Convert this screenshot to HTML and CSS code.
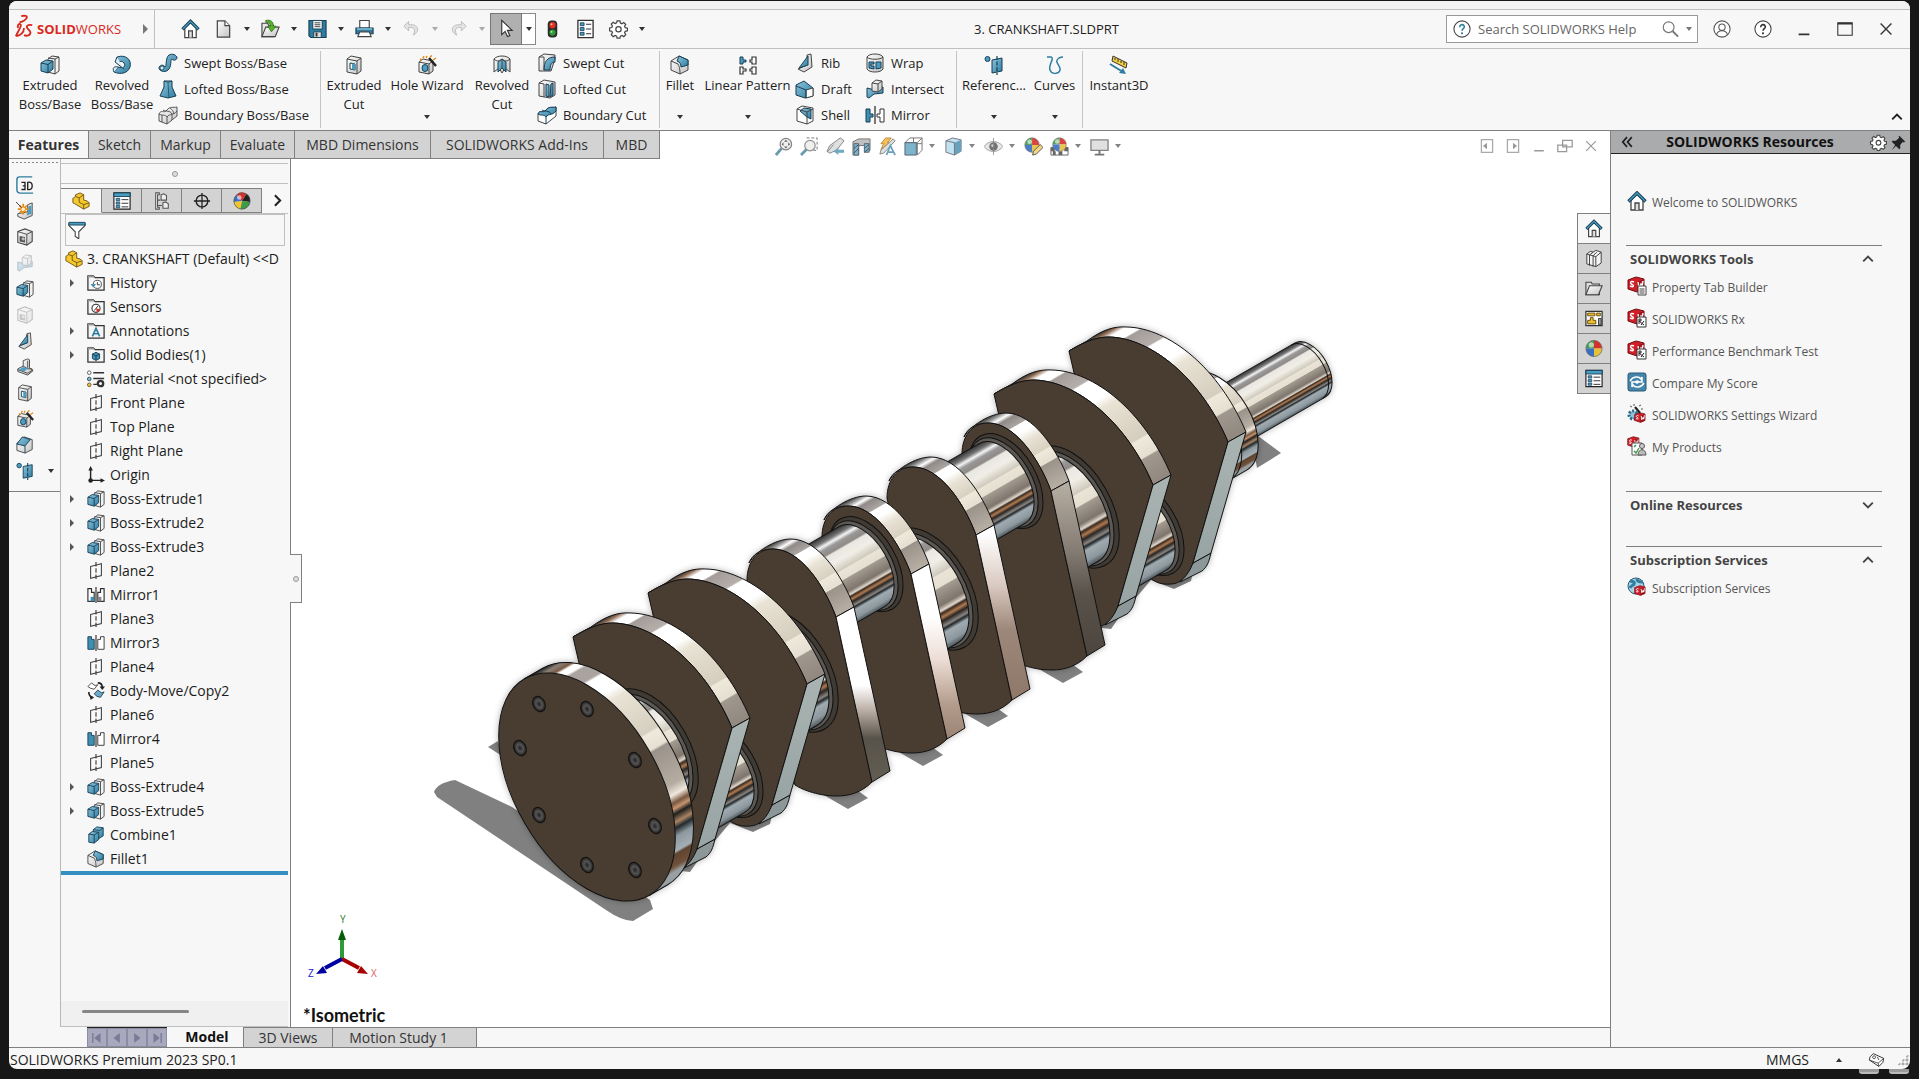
FILE: index.html
```html
<!DOCTYPE html>
<html lang="en">
<head>
<meta charset="utf-8">
<title>3. CRANKSHAFT.SLDPRT</title>
<link rel="stylesheet" href="styles.css">
</head>
<body>
<svg class="defs" aria-hidden="true">
<defs>
<linearGradient id="blue" x1="0" y1="0" x2="1" y2="1"><stop offset="0" stop-color="#8cc4dd"/><stop offset="1" stop-color="#2f7da0"/></linearGradient>
<linearGradient id="grey" x1="0" y1="0" x2="1" y2="1"><stop offset="0" stop-color="#ffffff"/><stop offset="1" stop-color="#c4c4c4"/></linearGradient>
</defs>
<symbol id="home" viewBox="0 0 20 20"><path d="M4 9v10h12V9l-6-6z" fill="#fff" stroke="#444" stroke-width="1.3"/><path d="M8 19v-7h4v7" fill="#ddd" stroke="#444" stroke-width="1.3"/><path d="M1.500 10.500L10 2l8.500 8.500" fill="none" stroke="#173f54" stroke-width="3.400"/><path d="M2 10L10 2l8 8" fill="none" stroke="#4a9dc2" stroke-width="1.300"/></symbol>
<symbol id="new" viewBox="0 0 20 20"><path d="M3.500 1.500h8l5 5v12h-13z" fill="url(#grey)" stroke="#444" stroke-width="1.300"/><path d="M11.500 1.500v5h5" fill="#fff" stroke="#444" stroke-width="1.200"/></symbol>
<symbol id="open" viewBox="0 0 20 20"><path d="M1 18V4h6l1 2h5v12z" fill="#e8e8e8" stroke="#444" stroke-width="1.200"/><path d="M1 18L5 8h14l-4 10z" fill="url(#grey)" stroke="#444" stroke-width="1.200"/><path d="M5 1c5-1 8 1 8 6h3l-5 6-4-6h3c0-3-2-4-5-4z" fill="#58b32c" stroke="#2c6b12" stroke-width=".8"/></symbol>
<symbol id="save" viewBox="0 0 20 20"><path d="M1 1h18v18H3l-2-2z" fill="#2f7da0" stroke="#173f54" stroke-width="1.200"/><path d="M5 1h10v9H5z" fill="#f4f4f4" stroke="#173f54"/><path d="M7 3.500h6M7 5.500h6M7 7.500h6" stroke="#444"/><path d="M6 13h8v6H6z" fill="#ddd" stroke="#173f54"/><path d="M8 14h2v4H8z" fill="#333"/></symbol>
<symbol id="print" viewBox="0 0 20 20"><path d="M5 1h10v8H5z" fill="#fff" stroke="#444" stroke-width="1.200"/><path d="M1 9h18v6H1z" fill="#2f7da0" stroke="#173f54" stroke-width="1.200"/><path d="M2 10h16" stroke="#8cc4dd" stroke-width="1.500"/><path d="M5 13h10l2 5H3z" fill="#fff" stroke="#444" stroke-width="1.200"/></symbol>
<symbol id="undo" viewBox="0 0 20 20"><path d="M7 2L2 7l5 5V8.500c5-1 8 1 5 8 7-4 6-12-5-11z" fill="#e4e4e4" stroke="#bbb"/></symbol>
<symbol id="redo" viewBox="0 0 20 20"><path d="M13 2l5 5-5 5V8.500c-5-1-8 1-5 8-7-4-6-12 5-11z" fill="#e4e4e4" stroke="#bbb"/></symbol>
<symbol id="cursor" viewBox="0 0 20 20"><path d="M5 1v15l3.500-3.500L11 18l2.500-1L11 11.500h5z" fill="#fff" stroke="#333" stroke-width="1.200"/></symbol>
<symbol id="traffic" viewBox="0 0 20 20"><rect x="5" y="1" width="10" height="18" rx="4" fill="#2b2b2b"/><circle cx="10" cy="6" r="3.300" fill="#e2321f"/><circle cx="10" cy="13.800" r="3.300" fill="#2f9a36"/><circle cx="9" cy="5" r="1" fill="#fbb"/><circle cx="9" cy="13" r="1" fill="#bfb"/></symbol>
<symbol id="list" viewBox="0 0 20 20"><path d="M2 1h16v18H2z" fill="#fff" stroke="#333" stroke-width="1.400"/><path d="M4.500 3.500h4v3h-4zM4.500 8.500h4v3h-4zM4.500 13.500h4v3h-4z" fill="#4a9dc2" stroke="#173f54" stroke-width=".9"/><path d="M10.500 5H16M10.500 10H16M10.500 15H16" stroke="#333" stroke-width="1.200"/></symbol>
<symbol id="gear" viewBox="0 0 20 20"><path d="M8.500 1.500h3l.5 2.200 1.600.7 2-1.300 2 2-1.200 2 .7 1.500 2.300.5v2.800l-2.300.6-.7 1.500 1.200 2-2 2-2-1.200-1.600.7-.5 2h-3l-.5-2-1.600-.7-2 1.200-2-2 1.200-2-.7-1.500-2.300-.6V8.900l2.300-.5.7-1.500-1.200-2 2-2 2 1.300 1.600-.7z" fill="#fff" stroke="#444" stroke-width="1.300"/><circle cx="10" cy="10.300" r="2.800" fill="#fff" stroke="#444" stroke-width="1.300"/></symbol>
<symbol id="extrude" viewBox="0 0 20 20"><path d="M8 4l4-3 7 1v14l-4 3-7-2z" fill="#f2f2f2" stroke="#444"/><path d="M15 4v15M8 3l7 1 4-2" fill="none" stroke="#444"/><path d="M1 8l5-3 7 1-0 8-5 4-7-2z" fill="url(#blue)" stroke="#173f54"/><path d="M1 8l7 1.500L13 6M8 9.500V18" fill="none" stroke="#173f54"/></symbol>
<symbol id="revolve" viewBox="0 0 20 20"><path d="M5 2c9-3 15 3 13 10-2 6-9 8-16 5l4-5c6 2 8-1 6-4-1-2-4-2-7-1z" fill="url(#blue)" stroke="#173f54"/><path d="M5 2l-2 5 9 7M2 17c-2-4 0-6 4-5" fill="#d9edf5" stroke="#173f54"/></symbol>
<symbol id="sweep" viewBox="0 0 20 20"><path d="M1 15c0-3 5-4 6-1 2 0 0-9 4-12 3-2 8 0 8 3 0 2-4 3-5 1-2 0 0 8-4 11-3 3-9 1-9-2z" fill="url(#blue)" stroke="#173f54"/><circle cx="4" cy="15" r="2" fill="#d9edf5" stroke="#173f54" stroke-width=".8"/></symbol>
<symbol id="loft" viewBox="0 0 20 20"><path d="M6 2h8v6l4 9-8 2-8-2 4-9z" fill="url(#blue)" stroke="#173f54"/><path d="M6 2l4 1.500L14 2M10 4l1 15" stroke="#173f54" fill="none" stroke-width=".7"/></symbol>
<symbol id="boundary" viewBox="0 0 20 20"><path d="M1 9c2-5 5 0 8-4s6-2 10-3v9l-10 8-8-3z" fill="url(#grey)" stroke="#555"/><path d="M1 9c3 2 6 0 8 3v7M9 12c3-4 6-1 10-6M5 5c3 2 7 0 9 4v6M4 10v7M12 3c2 2 3 2 4 6" fill="none" stroke="#555"/></symbol>
<symbol id="boundcut" viewBox="0 0 20 20"><path d="M1 9c2-5 5 0 8-4s6-2 10-3v9l-10 8-8-3z" fill="#fff" stroke="#444"/><path d="M1 9c2-5 5 0 8-4s6-2 10-3v4c-4 5-7 2-10 6-2-3-5-1-8-3z" fill="url(#blue)" stroke="#173f54"/><path d="M9 12v7M5 5c3 2 7 0 9 4" fill="none" stroke="#173f54"/></symbol>
<symbol id="excut" viewBox="0 0 20 20"><path d="M3 4l4-3 10 2v13l-4 3-10-2z" fill="url(#grey)" stroke="#444"/><path d="M3 4l10 2 4-3M13 6v13" fill="none" stroke="#444"/><path d="M6 8l5 1v6l-5-1z" fill="#fff" stroke="#173f54"/><path d="M8 8.500l3 .5v6l-3-.7z" fill="#4a9dc2"/></symbol>
<symbol id="cavity" viewBox="0 0 20 20"><path d="M2 4l8-3 8 3v11l-6 4-10-3z" fill="url(#grey)" stroke="#444" stroke-width="1.200"/><path d="M2 4l10 3 6-3M12 7v12" fill="none" stroke="#444"/><path d="M4 9l6 1v6l-6-1z" fill="#555"/><circle cx="8" cy="12" r="1.800" fill="#bbb"/></symbol>
<symbol id="sheet" viewBox="0 0 20 20"><path d="M8 3l5-2 2 1v9l4 3-6 5-11-4v-3l6-3z" fill="url(#grey)" stroke="#444"/><path d="M8 9l5 3h5M13 3v8M2 13l11 4 6-4" fill="none" stroke="#444"/><path d="M8 10l5 2-4 3-6-2z" fill="#4a9dc2"/></symbol>
<symbol id="hole" viewBox="0 0 20 20"><path d="M2 7l4-3 10 2v10l-4 3-10-2z" fill="url(#grey)" stroke="#444"/><path d="M2 7l10 2 4-3M12 9v10" fill="none" stroke="#444"/><ellipse cx="8" cy="13" rx="3" ry="3.500" fill="#4a9dc2" stroke="#173f54"/><path d="M12 3l7 8" stroke="#222" stroke-width="2.500"/><path d="M6 3l1-2M9 3l1-2M13 2l2-1.500M16 5l3-2M5 5L3 4" stroke="#e48b1a" stroke-width="1.500"/></symbol>
<symbol id="series" viewBox="0 0 20 20"><path d="M13 3l5-2v14l-9 4-7-3v-3l11-2z" fill="url(#grey)" stroke="#444"/><path d="M14 5l3-1v9l-5 2z" fill="#4a9dc2"/><path d="M8 2v12M2 8h12M4 4l8 8M12 4l-8 8" stroke="#e48b1a" stroke-width="2"/><circle cx="8" cy="8" r="2" fill="#fff3d0"/><path d="M0 0l6 6" stroke="#333"/></symbol>
<symbol id="revcut" viewBox="0 0 20 20"><path d="M2 4c3-4 13-4 16 0v13l-5-4-3 5-3-5-5 4z" fill="url(#grey)" stroke="#444"/><path d="M6 7l4-3 4 3v10l-4-4-4 4z" fill="url(#blue)" stroke="#173f54"/><path d="M2 4c3 3 6 2 8 0 2 2 5 3 8 0M10 4v10" fill="none" stroke="#444"/></symbol>
<symbol id="sweepcut" viewBox="0 0 20 20"><path d="M2 4l5-3 11 1v4L14 18H2z" fill="url(#grey)" stroke="#444"/><path d="M7 17C7 9 10 4 18 4v5c-4 0-5 4-5 8z" fill="url(#blue)" stroke="#173f54"/><path d="M2 4h5v13" fill="none" stroke="#444"/></symbol>
<symbol id="loftcut" viewBox="0 0 20 20"><path d="M2 4l5-3 11 2v13l-5 3-11-2z" fill="url(#grey)" stroke="#444"/><path d="M9 5l3 1v12l-3-1zM14 5l2-1v12l-3 2z" fill="url(#blue)" stroke="#173f54"/><path d="M2 4l5 1v13" fill="none" stroke="#444"/></symbol>
<symbol id="fillet" viewBox="0 0 20 20"><path d="M1 6l8-5 9 4v10l-8 4-9-4z" fill="url(#grey)" stroke="#444"/><path d="M1 6l7 3c1 2 2 4 2 10" fill="none" stroke="#444"/><path d="M9 1l9 4v5l-7 2c0-3-1-5-4-6z" fill="url(#blue)" stroke="#173f54"/></symbol>
<symbol id="fillet2" viewBox="0 0 20 20"><path d="M1 8l8-7 9 3v11l-8 4-9-3z" fill="url(#grey)" stroke="#444"/><path d="M1 9l6-8 9 3-6 7zM10 11v8" fill="url(#blue)" stroke="#173f54"/></symbol>
<symbol id="pattern" viewBox="0 0 20 20"><g fill="#fff" stroke="#333" stroke-width="1.200"><path d="M18 2h-4v3h-2v2h2v2h4zM2 12h3v2h3v2H5v3H2zM18 12h-4v2h-2v2h2v3h4z"/></g><path d="M2 2h3v3h3v2H5v2H2z" fill="#4a9dc2" stroke="#173f54"/></symbol>
<symbol id="rib" viewBox="0 0 20 20"><path d="M12 2l4-1 1 13-8 5-6-3 9-4z" fill="url(#grey)" stroke="#444"/><path d="M13 3l-9 12 9-3z" fill="url(#blue)" stroke="#173f54"/></symbol>
<symbol id="draft" viewBox="0 0 20 20"><path d="M1 6l8-4 9 7v8l-8 2-9-3z" fill="url(#blue)" stroke="#173f54"/><path d="M11 11l7-2v8l-7 2z" fill="#fff" stroke="#444"/><path d="M1 7l10 4v8" fill="none" stroke="#173f54"/></symbol>
<symbol id="shell" viewBox="0 0 20 20"><path d="M2 4l5-3 11 2v13l-6 3L2 16z" fill="#fff" stroke="#444"/><path d="M5 6l4-3 7 1v10l-4-2z" fill="url(#blue)" stroke="#173f54"/><path d="M2 4l10 3v12M12 7l6-3" fill="none" stroke="#444"/></symbol>
<symbol id="wrap" viewBox="0 0 20 20"><path d="M2 4v12c2 4 14 4 16 0V4c-2-4-14-4-16 0z" fill="url(#grey)" stroke="#444"/><path d="M2 4c2 3 14 3 16 0" fill="none" stroke="#444"/><path d="M4 9h5v2H6v2h3v3l-5-1zM11 9h5v6l-5 1z" fill="#4a9dc2" stroke="#173f54"/></symbol>
<symbol id="intersect" viewBox="0 0 20 20"><path d="M2 9l8 2 8-3v6l-9 1-5 4-2-1z" fill="url(#blue)" stroke="#173f54"/><path d="M7 4l4-3 6 1v8l-4 3-6-1z" fill="url(#grey)" stroke="#444"/><path d="M7 4l6 1 4-3M13 5v8" fill="none" stroke="#444"/></symbol>
<symbol id="mirror" viewBox="0 0 20 20"><path d="M1 4h4v5h3v3H5v5H1z" fill="#3f8fb3" stroke="#173f54"/><path d="M19 4h-4v5h-3v3h3v5h4z" fill="#fff" stroke="#333"/><path d="M10 1v18" stroke="#222" stroke-width="1.200"/></symbol>
<symbol id="mirrorf" viewBox="0 0 20 20"><path d="M1 3h4v4h3v10H1zM19 3h-4v4h-3v10h7z" fill="#fff" stroke="#333" stroke-width="1.300"/><path d="M4 12h4v5H4z" fill="#3f8fb3"/><path d="M12 12h4v5h-4z" fill="#888"/><path d="M10 1v18" stroke="#222" stroke-width="1.200"/></symbol>
<symbol id="mirrorb" viewBox="0 0 20 20"><path d="M1 3h4v3h3v11H1z" fill="#3f8fb3" stroke="#173f54"/><path d="M19 3h-4v3h-3v11h7z" fill="#fff" stroke="#333"/><path d="M10 1v18" stroke="#222" stroke-width="1.200"/></symbol>
<symbol id="refgeo" viewBox="0 0 20 20"><circle cx="3.500" cy="4" r="2.500" fill="#4a9dc2" stroke="#173f54"/><path d="M8 5l10-2v13L8 18z" fill="url(#blue)" stroke="#173f54"/><path d="M13 1v19" stroke="#173f54" stroke-dasharray="4 1.500" stroke-width="1.200"/></symbol>
<symbol id="curves" viewBox="0 0 20 20"><path d="M2 2h4c4 1-3 8-1 13 2 5 9 4 10 0 1-5-7-8-1-12 2-1 4-1 4-1" fill="none" stroke="#2f7da0" stroke-width="1.500"/></symbol>
<symbol id="instant" viewBox="0 0 20 20"><path d="M4 1l14 7-1 5-14-7z" fill="#f4cf3f" stroke="#333"/><path d="M6 3v2M9 4v3M12 6v2M15 7v3" stroke="#333"/><path d="M1 9l13 8" stroke="#2f7da0" stroke-width="2"/><path d="M17 19l-7-1 4-5z" fill="#2f7da0"/></symbol>
<symbol id="zoomfit" viewBox="0 0 20 20"><path d="M8 12l-6 7" stroke="#5b8ea6" stroke-width="3"/><circle cx="12.500" cy="7.500" r="6" fill="#eee" stroke="#777" stroke-width="1.300"/><path d="M12.500 3l2 2h-4zM12.500 12l2-2h-4zM8 7.500l2-2v4zM17 7.500l-2-2v4z" fill="#555"/></symbol>
<symbol id="zoomarea" viewBox="0 0 20 20"><path d="M7 1h11v13h-4" fill="none" stroke="#666" stroke-dasharray="3 2"/><path d="M7 13l-6 6" stroke="#5b8ea6" stroke-width="3"/><circle cx="10.500" cy="9" r="5.500" fill="#eee" stroke="#888" stroke-width="1.300"/></symbol>
<symbol id="prev" viewBox="0 0 20 20"><path d="M15 1l4 3-8 10-7 3-3-2 3-6z" fill="#ddd" stroke="#777"/><path d="M2 15l6-7" stroke="#777"/><path d="M8 15l5-4v2.500h6v3h-6V19z" fill="#5f9fbb"/></symbol>
<symbol id="section" viewBox="0 0 20 20"><path d="M1 5l6-3h12v12l-5 2V9H7v10H1z" fill="#bbb" stroke="#666"/><path d="M2 7h5v12H2zM13 7h5v9h-5z" fill="#6fabc6" stroke="#456"/><path d="M2 12l5-4M2 17l5-5M13 12l5-4M13 16l5-4" stroke="#345"/></symbol>
<symbol id="dynview" viewBox="0 0 20 20"><path d="M8 1h6l-4 5h3L3 13l3-6H3z" fill="#f5b942" stroke="#a06f1d" stroke-width=".8"/><path d="M16 2l2 2-12 13-4 1 1-4z" fill="#ddd" stroke="#777"/><path d="M9 19l4-10 5 10M11 16h5" fill="none" stroke="#5797b5" stroke-width="1.800"/></symbol>
<symbol id="orient" viewBox="0 0 20 20"><path d="M6 1h13v13l-5 5V6L19 1M6 1L1 6h13M10 1v5M19 7h-5" fill="none" stroke="#666"/><path d="M1 6h12v13H1z" fill="#6fabc6" stroke="#456"/></symbol>
<symbol id="display" viewBox="0 0 20 20"><path d="M2 4l7-3 9 2v12l-7 4-9-3z" fill="#bcdfee" stroke="#667"/><path d="M11 6l7-3v12l-7 4z" fill="#5797b5"/><path d="M2 4l9 2v13" fill="none" stroke="#667"/></symbol>
<symbol id="eye" viewBox="0 0 20 20"><path d="M0 10c5-7 15-7 20 0-5 7-15 7-20 0z" fill="#e4e4e4" stroke="#999"/><circle cx="10" cy="10" r="4.500" fill="#666"/><circle cx="9" cy="9" r="1.500" fill="#ccc"/><path d="M10 1v18" stroke="#777" stroke-width=".8"/></symbol>
<symbol id="ball" viewBox="0 0 20 20"><path d="M10 10V1a9 9 0 0 0-9 9z" fill="#3f9b47"/><path d="M10 10h9a9 9 0 0 0-9-9z" fill="#d6322b"/><path d="M10 10v9a9 9 0 0 0 9-9z" fill="#e6c13a"/><path d="M10 10H1a9 9 0 0 0 9 9z" fill="#3a6fc4"/><circle cx="7" cy="6" r="3" fill="#fff" opacity=".6"/><circle cx="10" cy="10" r="9" fill="none" stroke="#666" stroke-width=".8"/></symbol>
<symbol id="ball2" viewBox="0 0 20 20"><path d="M10 10L4 3a9 9 0 0 0-3 8z" fill="#3a6fc4"/><path d="M10 10l5-8a9 9 0 0 0-11 1z" fill="#d6322b"/><path d="M10 10l9 1a9 9 0 0 0-4-9z" fill="#222"/><path d="M10 10l-2 9a9 9 0 0 0 11-8z" fill="#3f9b47"/><path d="M10 10l-9 1a9 9 0 0 0 7 8z" fill="#f0c330"/><circle cx="7" cy="6" r="2.500" fill="#fff" opacity=".6"/><circle cx="10" cy="10" r="9" fill="none" stroke="#555" stroke-width=".8"/></symbol>
<symbol id="appear" viewBox="0 0 20 20"><use href="#ball" width="17" height="17"/><path d="M9 19l1-4 7-7 3 3-7 7z" fill="#f3d27a" stroke="#444"/></symbol>
<symbol id="scene" viewBox="0 0 20 20"><path d="M1 11h18v8H1z" fill="#fff" stroke="#555"/><path d="M1 11h4v4H1zM9 15h4v4H9zM15 11h4v4h-4zM3 15h3v4H3z" fill="#555"/><use href="#ball" x="2" width="16" height="16"/></symbol>
<symbol id="monitor" viewBox="0 0 20 20"><path d="M1 3h18v11H1z" fill="#ddd" stroke="#777" stroke-width="1.400"/><path d="M10 14v4M5 18.500h10" stroke="#666" stroke-width="2"/></symbol>
<symbol id="help" viewBox="0 0 20 20"><circle cx="10" cy="10" r="9" fill="#fff" stroke="#444" stroke-width="1.200"/><path d="M7.500 8c0-4 5.500-3.500 5 0-.3 1.500-2.500 2-2.500 4" fill="none" stroke="currentColor" stroke-width="1.800"/><circle cx="10" cy="14.800" r="1.200" fill="currentColor"/></symbol>
<symbol id="user" viewBox="0 0 20 20"><circle cx="10" cy="10" r="9" fill="#fff" stroke="#555" stroke-width="1.200"/><circle cx="10" cy="8" r="3.500" fill="none" stroke="#555" stroke-width="1.200"/><path d="M4 16.500c1-6 11-6 12 0" fill="none" stroke="#555" stroke-width="1.200"/></symbol>
<symbol id="search" viewBox="0 0 20 20"><circle cx="8.500" cy="8" r="6" fill="none" stroke="#777" stroke-width="1.300"/><path d="M13 12.500l6 6" stroke="#777" stroke-width="2"/></symbol>
<symbol id="part" viewBox="0 0 20 20"><path d="M4 5V3l5-2 4 2v6l4 1 2 2v4l-6 3L3 13l-2-1V7z" fill="#f5c82f" stroke="#6b5310"/><path d="M4 5l4 1.500v5L13 14l6-2M8 6.500L13 3M13 14v5" fill="none" stroke="#6b5310"/></symbol>
<symbol id="proptab" viewBox="0 0 20 20"><path d="M1 1h18v18H1z" fill="#fff" stroke="#222" stroke-width="1.300"/><path d="M1 1h18v4H1z" fill="#4a9dc2" stroke="#173f54"/><path d="M3.500 7h4v2.500h-4zM3.500 11h4v2.500h-4zM3.500 15h4v2.500h-4z" fill="#4a9dc2" stroke="#173f54" stroke-width=".8"/><path d="M9.500 8.500H17M9.500 12.500H17M9.500 16.500H17" stroke="#222"/></symbol>
<symbol id="config" viewBox="0 0 20 20"><path d="M3 1h4v2H5v14h2v2H3zM5 9h3M5 15h5" fill="#fff" stroke="#555" stroke-width="1.200"/><path d="M9 3l3-1 3 2v5H9zM11 12l3-1 3 2v5h-6z" fill="#eee" stroke="#555" stroke-width="1.200"/></symbol>
<symbol id="target" viewBox="0 0 20 20"><circle cx="10" cy="10" r="6.500" fill="none" stroke="#222" stroke-width="1.600"/><path d="M10 1v18M1 10h18" stroke="#222" stroke-width="1.400"/></symbol>
<symbol id="filter" viewBox="0 0 20 20"><path d="M1 3h18v2l-7 7v8l-4-3v-5L1 5z" fill="#fff" stroke="#444" stroke-width="1.200"/><path d="M1 1.500h18v3H1z" fill="#4a9dc2" stroke="#173f54"/></symbol>
<symbol id="fold" viewBox="0 0 20 20"><path d="M1 18V2h6l2 2h10v14z" fill="#f5f5f5" stroke="#333" stroke-width="1.400"/><path d="M1 2h6l2 2H1z" fill="#999"/></symbol>
<symbol id="history" viewBox="0 0 20 20"><use href="#fold"/><circle cx="11.500" cy="11.500" r="4.500" fill="#fff" stroke="#444"/><path d="M11.500 9v3h3" fill="none" stroke="#333"/><path d="M4 11h6l-3 4z" fill="#3f8fb3"/></symbol>
<symbol id="sensors" viewBox="0 0 20 20"><use href="#fold"/><circle cx="10" cy="11.500" r="4.500" fill="#fff" stroke="#333" stroke-width="1.200"/><path d="M10 11.500l4 1a5 5 0 0 1-3 4z" fill="#d6322b"/><path d="M8 14l4-5" stroke="#222"/></symbol>
<symbol id="annot" viewBox="0 0 20 20"><use href="#fold"/><path d="M6 16L10 7l4 9M7.500 13h5" fill="none" stroke="#2f7da0" stroke-width="1.800"/></symbol>
<symbol id="bodies" viewBox="0 0 20 20"><use href="#fold"/><path d="M6 9l4-2 4 2v5l-4 2-4-2z" fill="#3f8fb3" stroke="#173f54"/><path d="M6 9l4 2 4-2M10 11v5" fill="none" stroke="#173f54"/></symbol>
<symbol id="material" viewBox="0 0 20 20"><circle cx="2.500" cy="3" r="2" fill="#fff" stroke="#555"/><circle cx="2.500" cy="10" r="2" fill="#6fc0df" stroke="#345"/><circle cx="2.500" cy="16.500" r="2" fill="#f0c330" stroke="#654"/><path d="M7 3h12M7 9.500h12M7 16h4" stroke="#333" stroke-width="1.600"/><circle cx="15" cy="15" r="3" fill="none" stroke="#333" stroke-width="2.600"/></symbol>
<symbol id="plane" viewBox="0 0 20 20"><path d="M4 5l12-3v13L4 18z" fill="#fafafa" stroke="#444" stroke-width="1.200"/><path d="M10 0v20" stroke="#333" stroke-width="1.200" stroke-dasharray="5 2"/></symbol>
<symbol id="origin" viewBox="0 0 20 20"><path d="M4 3v13h13" fill="none" stroke="#222" stroke-width="1.600"/><path d="M4 0l2.500 5h-5zM20 16l-5-2.500v5z" fill="#222"/><circle cx="4" cy="16" r="2.500" fill="#222"/></symbol>
<symbol id="move" viewBox="0 0 20 20"><path d="M1 5l4-4 4 3 3-1-4 5-4-1z" fill="#fff" stroke="#444"/><path d="M8 13l4-4 4 3 3-1-4 6-4-1z" fill="#6fabc6" stroke="#173f54"/><path d="M12 1c4 0 5 3 5 5M2 11c0 3 1 5 4 6" fill="none" stroke="#222" stroke-width="1.800"/><path d="M14 5h6l-3 4zM3 15l5 2-4 3z" fill="#222"/></symbol>
<symbol id="combine" viewBox="0 0 20 20"><path d="M7 4l4-3 7 1v9l-5 3-6-1z" fill="url(#blue)" stroke="#173f54"/><path d="M2 9l4-3 7 1v8l-5 4-6-1z" fill="url(#blue)" stroke="#173f54"/><path d="M2 9l6 1 5-3M8 10v9M7 4l7 1 4-3" fill="none" stroke="#173f54"/></symbol>
<symbol id="library" viewBox="0 0 20 20"><path d="M2 5l4-3 3 1 3-2 6 2v12l-6 4-10-3z" fill="#f4f4f4" stroke="#333"/><path d="M2 5l3 1v12M5 6l4-3M5 6l4 1v12M9 7l4-4M9 7l3 1v11M12 8l6-5" fill="none" stroke="#333"/></symbol>
<symbol id="folder" viewBox="0 0 20 20"><path d="M1 17V3h6l1 2h8v12z" fill="#ddd" stroke="#444" stroke-width="1.200"/><path d="M1 17L5 7h14l-4 10z" fill="url(#grey)" stroke="#444" stroke-width="1.200"/></symbol>
<symbol id="palette" viewBox="0 0 20 20"><path d="M1 2h18v16H1z" fill="#fff" stroke="#333" stroke-width="1.400"/><path d="M3 4h8v3H3zM13 4h4v3h-4zM6 9h3v3h3v4H3v-4h3z" fill="#f0bf2a" stroke="#5a4510"/><path d="M15 10h3v7h-3z" fill="#999" stroke="#333"/></symbol>
<symbol id="cube" viewBox="0 0 20 20"><path d="M1 4l8-3 8 2v10l-7 3-9-3z" fill="#cf2027" stroke="#6e0d12"/><path d="M10 6l7-3v10l-7 3z" fill="#9c141a"/><path d="M7 6c-4-2-4 2-2 2.500S7 12 3 10M11 6l1 6 2-4 1 3 1-6" fill="none" stroke="#fff" stroke-width="1.400"/></symbol>
<symbol id="swtab" viewBox="0 0 20 20"><use href="#cube"/><path d="M11 10h8v9h-8z" fill="#fff" stroke="#444"/><path d="M12.500 13h5M12.500 15h5M12.500 17h5" stroke="#444"/></symbol>
<symbol id="swrx" viewBox="0 0 20 20"><use href="#cube"/><path d="M10 9h9v10h-9z" fill="#fff" stroke="#333"/><path d="M12 16v-5h2v2h-2l5 4M17 13l-3 4" fill="none" stroke="#222"/></symbol>
<symbol id="compare" viewBox="0 0 20 20"><rect x="1" y="1" width="18" height="18" rx="2" fill="#4585aa" stroke="#285a78"/><path d="M3 9c3-5 9-5 11-2l1-2v5h-4l1-1M17 11c-3 5-9 5-11 2l-1 2v-5h4" fill="none" stroke="#fff" stroke-width="1.500"/><circle cx="10" cy="10" r="1.800" fill="#fff"/></symbol>
<symbol id="wizard" viewBox="0 0 20 20"><circle cx="6" cy="11" r="4" fill="#8cc4dd" stroke="#2f6a88" stroke-width="3" stroke-dasharray="2 1.500"/><use href="#cube" x="7" y="8" width="13" height="13"/><path d="M8 3l5 6" stroke="#222" stroke-width="2.200"/><path d="M3 2l2 1M7 0v2M12 2l2-1M14 5h2" stroke="#555"/></symbol>
<symbol id="products" viewBox="0 0 20 20"><use href="#cube" width="14" height="14"/><path d="M5 7h10v12H5z" fill="#fff" stroke="#555"/><path d="M7 11l2-2M7 15l2 2 3-5" stroke="#3a9a3f" fill="none" stroke-width="1.400"/><circle cx="15" cy="10" r="2.500" fill="#ccc" stroke="#555"/><path d="M11 19c0-7 8-7 8 0z" fill="#bbb" stroke="#555"/></symbol>
<symbol id="globe" viewBox="0 0 20 20"><circle cx="9" cy="9" r="8" fill="#a8d2e6" stroke="#2b5a75"/><path d="M3 4c3 0 5 1 4 3s-3 1-4 4M10 2c0 3 3 3 6 3" stroke="#2f7da0" stroke-width="3" fill="none"/><use href="#cube" x="7" y="8" width="13" height="13"/></symbol>
<symbol id="tag" viewBox="0 0 20 20"><path d="M2 6l4-4 13 6-1 5-5 5L1 10z" fill="#fff" stroke="#333" stroke-width="1.200"/><path d="M1 10l11 4 7-6M12 14l1 4" fill="none" stroke="#333"/><circle cx="7" cy="6.500" r="1.800" fill="none" stroke="#333"/><path d="M11 6l2 4" stroke="#333"/></symbol>
<symbol id="sk3d" viewBox="0 0 20 20"><path d="M18 1H4Q1 1 1 4v11q0 4 4 4h14" fill="none" stroke="#2f7da0" stroke-width="1.600"/><path d="M6 7h4v4H7.500M10 11v4H6M13 7v8q5 1 5-4t-5-4z" fill="none" stroke="#222" stroke-width="1.500"/></symbol>
<symbol id="pin" viewBox="0 0 20 20"><path d="M11 2l7 7-2 1-1-1-3 4 0 4-1 1-4-4-5 5 4-6-4-4 1-1h4l4-4-1-1z" fill="#222"/></symbol>
<symbol id="up" viewBox="0 0 10 10"><path d="M1 7l4-4 4 4" fill="none" stroke="currentColor" stroke-width="1.600"/></symbol>
<symbol id="down" viewBox="0 0 10 10"><path d="M1 3l4 4 4-4" fill="none" stroke="currentColor" stroke-width="1.600"/></symbol>
<symbol id="right" viewBox="0 0 10 10"><path d="M3 1l4 4-4 4" fill="none" stroke="currentColor" stroke-width="1.600"/></symbol>
<symbol id="left2" viewBox="0 0 10 10"><path d="M5 1L1.500 5 5 9M9 1L5.500 5 9 9" fill="none" stroke="currentColor" stroke-width="1.500"/></symbol>
<symbol id="first" viewBox="0 0 20 20"><path d="M4 3v14" stroke="#7b7b98" stroke-width="2"/><path d="M15 3v14l-9-7z" fill="#7b7b98"/></symbol>
<symbol id="back" viewBox="0 0 20 20"><path d="M14 3v14l-9-7z" fill="#7b7b98"/></symbol>
<symbol id="next" viewBox="0 0 20 20"><path d="M6 3v14l9-7z" fill="#7b7b98"/></symbol>
<symbol id="last" viewBox="0 0 20 20"><path d="M16 3v14" stroke="#7b7b98" stroke-width="2"/><path d="M5 3v14l9-7z" fill="#7b7b98"/></symbol>
<symbol id="paneL" viewBox="0 0 20 20"><path d="M3 2h14v16H3z" fill="none" stroke="#aaa" stroke-width="1.600"/><path d="M10 6v8l-5-4z" fill="#999"/></symbol>
<symbol id="paneR" viewBox="0 0 20 20"><path d="M3 2h14v16H3z" fill="none" stroke="#aaa" stroke-width="1.600"/><path d="M10 6v8l5-4z" fill="#999"/></symbol>
<symbol id="min" viewBox="0 0 20 20"><path d="M4 16h12" stroke="currentColor" stroke-width="2"/></symbol>
<symbol id="restore" viewBox="0 0 20 20"><path d="M7 3h12v8H7zM1 9h11v8H1z" fill="#fff" stroke="currentColor" stroke-width="1.600"/></symbol>
<symbol id="max" viewBox="0 0 20 20"><path d="M2 3h16v14H2z" fill="none" stroke="currentColor" stroke-width="1.200"/><path d="M2 4h16" stroke="currentColor" stroke-width="2"/></symbol>
<symbol id="close" viewBox="0 0 20 20"><path d="M4 4l12 12M16 4L4 16" stroke="currentColor" stroke-width="1.500"/></symbol>
</svg>

<div class="window">
  <div class="strip"></div>
  <header class="titlebar">
    <div class="logo">
      <svg class="ds" viewBox="0 0 22 28" aria-hidden="true"><path d="M8 2c4-1 7 0 6 2s-4 4-8 5M2 24c4-8 7-12 5-13s-4 2-2 4M2 24c5 0 9-4 9-9M20 12c-3-1-6 0-6 2s5 4 4 7-5 3-7 2" fill="none" stroke="#da291c" stroke-width="2"/></svg>
      <span><b>SOLID</b>WORKS</span><i class="tri"></i>
    </div>
    <div class="quick">
      <button aria-label="Home"><svg><use href="#home"/></svg></button>
      <button aria-label="New"><svg><use href="#new"/></svg></button><button class="dd" aria-label="New options"></button>
      <button aria-label="Open"><svg><use href="#open"/></svg></button><button class="dd" aria-label="Open options"></button>
      <button aria-label="Save"><svg><use href="#save"/></svg></button><button class="dd" aria-label="Save options"></button>
      <button aria-label="Print"><svg><use href="#print"/></svg></button><button class="dd" aria-label="Print options"></button>
      <button aria-label="Undo"><svg><use href="#undo"/></svg></button><button class="dd dim" aria-label="Undo options"></button>
      <button aria-label="Redo"><svg><use href="#redo"/></svg></button><button class="dd dim" aria-label="Redo options"></button>
      <button class="select" aria-label="Select"><svg><use href="#cursor"/></svg></button><button class="dd seldd" aria-label="Select options"></button>
      <button class="wide" aria-label="Rebuild"><svg><use href="#traffic"/></svg></button>
      <button class="wide" aria-label="File properties"><svg><use href="#list"/></svg></button>
      <button class="wide" aria-label="Options"><svg><use href="#gear"/></svg></button><button class="dd last" aria-label="More options"></button>
    </div>
    <h1>3. CRANKSHAFT.SLDPRT</h1>
    <div class="search"><svg class="q"><use href="#help"/></svg><input type="text" aria-label="Search SOLIDWORKS Help" placeholder="Search SOLIDWORKS Help"><svg><use href="#search"/></svg><i class="caret"></i></div>
    <div class="sys">
      <button aria-label="Account"><svg><use href="#user"/></svg></button><button aria-label="Help"><svg><use href="#help"/></svg></button><button aria-label="Minimize"><svg><use href="#min"/></svg></button><button aria-label="Maximize"><svg><use href="#max"/></svg></button><button aria-label="Close"><svg><use href="#close"/></svg></button>
    </div>
  </header>

  <div class="ribbon">
    <section class="g1">
      <button class="big"><svg><use href="#extrude"/></svg>Extruded<br>Boss/Base</button>
      <button class="big"><svg><use href="#revolve"/></svg>Revolved<br>Boss/Base</button>
      <div class="stack"><button><svg><use href="#sweep"/></svg>Swept Boss/Base</button><button><svg><use href="#loft"/></svg>Lofted Boss/Base</button><button><svg><use href="#boundary"/></svg>Boundary Boss/Base</button></div>
    </section>
    <section class="g2">
      <button class="big"><svg><use href="#excut"/></svg>Extruded<br>Cut</button>
      <button class="big"><svg><use href="#hole"/></svg>Hole Wizard<i class="caret"></i></button>
      <button class="big"><svg><use href="#revcut"/></svg>Revolved<br>Cut</button>
      <div class="stack"><button><svg><use href="#sweepcut"/></svg>Swept Cut</button><button><svg><use href="#loftcut"/></svg>Lofted Cut</button><button><svg><use href="#boundcut"/></svg>Boundary Cut</button></div>
    </section>
    <section class="g3">
      <button class="big"><svg><use href="#fillet"/></svg>Fillet<i class="caret"></i></button>
      <button class="big"><svg><use href="#pattern"/></svg>Linear Pattern<i class="caret"></i></button>
      <div class="stack"><button><svg><use href="#rib"/></svg>Rib</button><button><svg><use href="#draft"/></svg>Draft</button><button><svg><use href="#shell"/></svg>Shell</button></div>
      <div class="stack"><button><svg><use href="#wrap"/></svg>Wrap</button><button><svg><use href="#intersect"/></svg>Intersect</button><button><svg><use href="#mirror"/></svg>Mirror</button></div>
    </section>
    <section class="g4">
      <button class="big"><svg><use href="#refgeo"/></svg>Referenc...<i class="caret"></i></button>
      <button class="big"><svg><use href="#curves"/></svg>Curves<i class="caret"></i></button>
    </section>
    <section class="g5"><button class="big"><svg><use href="#instant"/></svg>Instant3D</button></section>
    <button class="collapse" aria-label="Collapse ribbon"><svg><use href="#up"/></svg></button>
  </div>

  <div class="main">
    <div class="work">
      <div class="toprow">
        <nav class="cmdtabs"><button class="on">Features</button><button>Sketch</button><button>Markup</button><button>Evaluate</button><button>MBD Dimensions</button><button>SOLIDWORKS Add-Ins</button><button>MBD</button></nav>
        <div class="hud">
          <button aria-label="Zoom to fit"><svg><use href="#zoomfit"/></svg></button><button aria-label="Zoom to area"><svg><use href="#zoomarea"/></svg></button><button aria-label="Previous view"><svg><use href="#prev"/></svg></button><button aria-label="Section view"><svg><use href="#section"/></svg></button><button aria-label="Dynamic annotation views"><svg><use href="#dynview"/></svg></button><button aria-label="View orientation"><svg><use href="#orient"/></svg></button><i class="caret"></i><button aria-label="Display style"><svg><use href="#display"/></svg></button><i class="caret"></i><button aria-label="Hide or show items"><svg><use href="#eye"/></svg></button><i class="caret"></i><button aria-label="Edit appearance"><svg><use href="#appear"/></svg></button><button aria-label="Apply scene"><svg><use href="#scene"/></svg></button><i class="caret"></i><button aria-label="View settings"><svg><use href="#monitor"/></svg></button><i class="caret"></i>
        </div>
        <div class="docctl"><button aria-label="Pane left"><svg><use href="#paneL"/></svg></button><button aria-label="Pane right"><svg><use href="#paneR"/></svg></button><button aria-label="Minimize document"><svg><use href="#min"/></svg></button><button aria-label="Restore document"><svg><use href="#restore"/></svg></button><button aria-label="Close document"><svg><use href="#close"/></svg></button></div>
      </div>

      <div class="bodyrow">
        <aside class="tools">
          <div class="grip"></div>
          <button aria-label="3D sketch"><svg><use href="#sk3d"/></svg></button>
          <button aria-label="Hole series"><svg><use href="#series"/></svg></button>
          <button aria-label="Cavity"><svg><use href="#cavity"/></svg></button>
          <button class="off" aria-label="Join"><svg><use href="#intersect"/></svg></button>
          <button aria-label="Boss"><svg><use href="#extrude"/></svg></button>
          <button class="off" aria-label="Indent"><svg><use href="#cavity"/></svg></button>
          <button aria-label="Rib"><svg><use href="#rib"/></svg></button>
          <button aria-label="Sheet"><svg><use href="#sheet"/></svg></button>
          <button aria-label="Cut"><svg><use href="#excut"/></svg></button>
          <button aria-label="Hole wizard"><svg><use href="#hole"/></svg></button>
          <button aria-label="Chamfer"><svg><use href="#fillet2"/></svg></button>
          <button aria-label="Reference geometry"><svg><use href="#refgeo"/></svg><i class="caret"></i></button>
        </aside>
        <aside class="tree">
          <div class="split"><i class="knob"></i></div>
          <nav class="mgr"><button class="on" aria-label="Feature tree"><svg><use href="#part"/></svg></button><button aria-label="Properties"><svg><use href="#proptab"/></svg></button><button aria-label="Configurations"><svg><use href="#config"/></svg></button><button aria-label="Dimensions"><svg><use href="#target"/></svg></button><button aria-label="Display"><svg><use href="#ball2"/></svg></button><button class="more" aria-label="More tabs"><svg><use href="#right"/></svg></button></nav>
          <div class="filter"><svg><use href="#filter"/></svg><input type="text" aria-label="Filter tree"></div>
          <ul>
            <li class="root"><svg><use href="#part"/></svg>3. CRANKSHAFT (Default) &lt;&lt;D</li>
            <li class="ex"><svg><use href="#history"/></svg>History</li>
            <li><svg><use href="#sensors"/></svg>Sensors</li>
            <li class="ex"><svg><use href="#annot"/></svg>Annotations</li>
            <li class="ex"><svg><use href="#bodies"/></svg>Solid Bodies(1)</li>
            <li><svg><use href="#material"/></svg>Material &lt;not specified&gt;</li>
            <li><svg><use href="#plane"/></svg>Front Plane</li>
            <li><svg><use href="#plane"/></svg>Top Plane</li>
            <li><svg><use href="#plane"/></svg>Right Plane</li>
            <li><svg><use href="#origin"/></svg>Origin</li>
            <li class="ex"><svg><use href="#extrude"/></svg>Boss-Extrude1</li>
            <li class="ex"><svg><use href="#extrude"/></svg>Boss-Extrude2</li>
            <li class="ex"><svg><use href="#extrude"/></svg>Boss-Extrude3</li>
            <li><svg><use href="#plane"/></svg>Plane2</li>
            <li><svg><use href="#mirrorf"/></svg>Mirror1</li>
            <li><svg><use href="#plane"/></svg>Plane3</li>
            <li><svg><use href="#mirrorb"/></svg>Mirror3</li>
            <li><svg><use href="#plane"/></svg>Plane4</li>
            <li><svg><use href="#move"/></svg>Body-Move/Copy2</li>
            <li><svg><use href="#plane"/></svg>Plane6</li>
            <li><svg><use href="#mirrorb"/></svg>Mirror4</li>
            <li><svg><use href="#plane"/></svg>Plane5</li>
            <li class="ex"><svg><use href="#extrude"/></svg>Boss-Extrude4</li>
            <li class="ex"><svg><use href="#extrude"/></svg>Boss-Extrude5</li>
            <li><svg><use href="#combine"/></svg>Combine1</li>
            <li><svg><use href="#fillet"/></svg>Fillet1</li>
          </ul>
          <div class="rollback"></div>
          <div class="hscroll"><i></i></div>
        </aside>

        <main class="canvas">
          <svg class="model" viewBox="291 159 1319 868" role="img" aria-label="Crankshaft, isometric view">
            <defs>
              <linearGradient id="cyl" x1="0" y1="0" x2="0" y2="1"><stop offset="0" stop-color="#333"/><stop offset=".06" stop-color="#777"/><stop offset=".1" stop-color="#f4f4f4"/><stop offset=".14" stop-color="#999"/><stop offset=".2" stop-color="#8f8a86"/><stop offset=".22" stop-color="#e9e7e2"/><stop offset=".32" stop-color="#f0eee6"/><stop offset=".42" stop-color="#cfcabd"/><stop offset=".43" stop-color="#e9e4d6"/><stop offset=".52" stop-color="#e4dfd1"/><stop offset=".53" stop-color="#a39b90"/><stop offset=".66" stop-color="#7e766d"/><stop offset=".7" stop-color="#e0d8cc"/><stop offset=".72" stop-color="#3a2a20"/><stop offset=".75" stop-color="#b07a50"/><stop offset=".78" stop-color="#2a2624"/><stop offset=".82" stop-color="#8a8580"/><stop offset=".84" stop-color="#23282b"/><stop offset=".87" stop-color="#9fabb1"/><stop offset=".95" stop-color="#8c989e"/><stop offset="1" stop-color="#4c5559"/></linearGradient>
              <linearGradient id="disc" x1="0" y1="0" x2="0" y2="1"><stop offset="0" stop-color="#222"/><stop offset=".02" stop-color="#8a8178"/><stop offset=".04" stop-color="#7a5a44"/><stop offset=".05" stop-color="#fff"/><stop offset=".07" stop-color="#fff"/><stop offset=".08" stop-color="#a9a29f"/><stop offset=".13" stop-color="#aaa3a0"/><stop offset=".14" stop-color="#fff"/><stop offset=".21" stop-color="#fff"/><stop offset=".25" stop-color="#e9e3d5"/><stop offset=".43" stop-color="#d6cfc0"/><stop offset=".44" stop-color="#efeadd"/><stop offset=".5" stop-color="#e6e0d2"/><stop offset=".51" stop-color="#9b938b"/><stop offset=".66" stop-color="#b5aca2"/><stop offset=".7" stop-color="#f0e8dc"/><stop offset=".73" stop-color="#77563e"/><stop offset=".75" stop-color="#c79470"/><stop offset=".77" stop-color="#20201f"/><stop offset=".8" stop-color="#a98463"/><stop offset=".82" stop-color="#222a2d"/><stop offset=".85" stop-color="#8d999e"/><stop offset=".9" stop-color="#a3afb4"/><stop offset=".91" stop-color="#5e4430"/><stop offset=".95" stop-color="#70513a"/><stop offset=".97" stop-color="#98a0a3"/></linearGradient>
              <linearGradient id="rimA" gradientUnits="userSpaceOnUse" x1="573" y1="637" x2="652" y2="774"><stop offset="0" stop-color="#3c3a38"/><stop offset=".02" stop-color="#8d6a50"/><stop offset=".05" stop-color="#fff"/><stop offset=".1" stop-color="#fff"/><stop offset=".11" stop-color="#a39c99"/><stop offset=".22" stop-color="#b5afab"/><stop offset=".23" stop-color="#fff"/><stop offset=".36" stop-color="#fff"/><stop offset=".42" stop-color="#e9e3d5"/><stop offset=".7" stop-color="#d5cdbd"/><stop offset=".71" stop-color="#efe9dc"/><stop offset=".82" stop-color="#e5dfd1"/><stop offset=".83" stop-color="#a0978e"/><stop offset="1" stop-color="#90877e"/></linearGradient>
              <linearGradient id="rimB" gradientUnits="userSpaceOnUse" x1="757" y1="553" x2="803" y2="633"><stop offset="0" stop-color="#4a4846"/><stop offset=".04" stop-color="#999"/><stop offset=".08" stop-color="#fff"/><stop offset=".12" stop-color="#8f8a87"/><stop offset=".22" stop-color="#aaa5a1"/><stop offset=".23" stop-color="#fff"/><stop offset=".32" stop-color="#fff"/><stop offset=".42" stop-color="#e9e3d5"/><stop offset=".6" stop-color="#d8d1c2"/><stop offset=".61" stop-color="#efe9dc"/><stop offset=".74" stop-color="#e5dfd1"/><stop offset=".75" stop-color="#9b928a"/><stop offset="1" stop-color="#b5aca2"/></linearGradient>
              <linearGradient id="s4" x1="0" y1="0" x2="0" y2="1"><stop offset=".45" stop-color="#fff"/><stop offset=".6" stop-color="#b5a89f"/><stop offset=".75" stop-color="#57534a"/><stop offset="1" stop-color="#625e52"/></linearGradient>
              <linearGradient id="s5" x1="0" y1="0" x2="0" y2="1"><stop offset=".3" stop-color="#fff"/><stop offset=".55" stop-color="#ecdcd4"/><stop offset=".8" stop-color="#b39c8c"/><stop offset="1" stop-color="#9b8474"/></linearGradient>
              <linearGradient id="s6" x1="0" y1="0" x2="0" y2="1"><stop offset=".05" stop-color="#fff"/><stop offset=".35" stop-color="#d9c8bf"/><stop offset=".6" stop-color="#9c877a"/><stop offset="1" stop-color="#8f7868"/></linearGradient>
              <linearGradient id="s7" x1="0" y1="0" x2="0" y2="1"><stop offset="0" stop-color="#b8b0a4"/><stop offset=".4" stop-color="#847c73"/><stop offset=".65" stop-color="#57514a"/><stop offset="1" stop-color="#4d463f"/></linearGradient>
              <linearGradient id="flat" x1="0" y1="0" x2="0" y2="1"><stop offset="0" stop-color="#a9b4b3"/><stop offset="1" stop-color="#98a4a3"/></linearGradient>
              <radialGradient id="hol"><stop offset="0" stop-color="#222"/><stop offset=".5" stop-color="#555"/><stop offset="1" stop-color="#1c1a18"/></radialGradient>
              <g id="main"><ellipse cx="-2" rx="38" ry="67" fill="#403a35"/><ellipse cx="-5" rx="36" ry="63" fill="#5c5854"/><path d="M-66-60H-7A34 60 0 0 1-7 60H-66A34 60 0 0 1-66-60z" fill="url(#cyl)"/></g>
              <g id="crankpin"><ellipse cx="-2" rx="30" ry="52" fill="#403a35"/><ellipse cx="-5" rx="28" ry="49" fill="#5c5854"/><path d="M-66-46H-7A26 46 0 0 1-7 46H-66A26 46 0 0 1-66-46z" fill="url(#cyl)"/></g>
              <g id="webA">
                <path d="M573 637L591 627C606 616 618 612 631 613C673 614 723 654 750 718L732 728C705 664 655 624 613 623C600 623 588 628 573 637z" fill="url(#rimA)"/>
                <path d="M697 849L715 839C713 848 711 853 706 857L684 868z" fill="#8c9799"/>
                <path d="M573 637C588 628 600 623 613 623C655 624 705 664 732 728L697 849C692 862 684 870 675 870C665 871 658 868 652 862C625 835 590 740 579 663z" fill="#493d32"/>
                <path d="M732 728L750 718L715 839L697 849z" fill="url(#flat)"/>
              </g>
              <g id="webB">
                <path d="M749 563C755 552 775 539 791 539C818 539 842 575 854 607L836 617C824 585 800 549 773 549C760 549 752 555 749 563z" fill="url(#rimB)"/>
                <path d="M747 580C747 562 757 549 773 549C800 549 824 585 836 617L872 782C862 792 850 796 837 796C815 796 800 788 795 785L783 745z" fill="#493d32"/>
              </g>
              <path id="side" d="M836 617L854 607L890 771L872 782z"/>
              <path id="shB" d="M815 790L848 809L868 798L850 785z"/>
              <path id="shA" d="M655 868L690 872L697 862L730 823L753 832L770 824L772 815L740 800z"/>
            </defs>
            <g class="shadow">
              <path d="M434 792Q437 783 455 780L512 807L650 900L653 909L633 921Q622 921 606 910L437 797z"/>
              <path d="M488 747L498 741L502 756z"/>
              <use href="#shA"/><use href="#shA" x="421" y="-243"/>
              <use href="#shB"/><use href="#shB" x="75" y="-43"/><use href="#shB" x="140" y="-82"/><use href="#shB" x="215" y="-126"/>
              <path d="M1250 430L1281 453L1257 468z"/>
            </g>
            <g class="metal">
              <g transform="translate(1149 463) rotate(-30)">
                <path d="M60-31H186A18 31 0 0 1 186 31H60z" fill="url(#cyl)"/><path d="M182-31A18 31 0 0 1 182 31" fill="none"/>
                <path d="M10-55H81A32 55 0 0 1 81 55H10z" fill="url(#disc)"/><path d="M62-55A32 55 0 0 1 62 55" fill="none"/>
              </g>
              <use href="#webA" x="496" y="-286"/>
              <use href="#crankpin" transform="translate(1149 527) rotate(-30)"/>
              <use href="#webA" x="421" y="-243"/>
              <use href="#main" transform="translate(1074 506) rotate(-30)"/>
              <use href="#webB" x="215" y="-126"/><use href="#side" x="215" y="-126" fill="url(#s7)"/>
              <use href="#crankpin" transform="translate(1008 480) rotate(-30)"/>
              <use href="#webB" x="140" y="-82"/><use href="#side" x="140" y="-82" fill="url(#s6)"/>
              <use href="#main" transform="translate(933 588) rotate(-30)"/>
              <use href="#webB" x="75" y="-43"/><use href="#side" x="75" y="-43" fill="url(#s5)"/>
              <use href="#crankpin" transform="translate(868 563) rotate(-30)"/>
              <use href="#webB"/><use href="#side" fill="url(#s4)"/>
              <use href="#main" transform="translate(793 670) rotate(-30)"/>
              <use href="#webA" x="75" y="-44"/>
              <use href="#crankpin" transform="translate(728 769) rotate(-30)"/>
              <use href="#webA"/>
              <use href="#main" transform="translate(653 749) rotate(-30)"/>
              <g transform="translate(587 787) rotate(-30)">
                <path d="M0-125H21A72 125 0 0 1 21 125H0z" fill="url(#disc)"/><ellipse rx="72" ry="125" fill="#493d32"/>
              </g>
              <g fill="url(#hol)">
                <ellipse rx="6" ry="8" transform="translate(539 704) rotate(-25)"/><ellipse rx="6" ry="8" transform="translate(587 709) rotate(-25)"/><ellipse rx="6" ry="8" transform="translate(520 748) rotate(-25)"/><ellipse rx="6" ry="8" transform="translate(635 760) rotate(-25)"/><ellipse rx="6" ry="8" transform="translate(539 815) rotate(-25)"/><ellipse rx="6" ry="8" transform="translate(655 826) rotate(-25)"/><ellipse rx="6" ry="8" transform="translate(587 865) rotate(-25)"/><ellipse rx="6" ry="8" transform="translate(635 870) rotate(-25)"/>
              </g>
            </g>
            <g class="triad">
              <path d="M342 959V938" stroke="#2f9a36" stroke-width="4"/><path d="M342 929l4 11h-8z" fill="#075c07"/>
              <path d="M342 959l17 9" stroke="#a80000" stroke-width="4"/><path d="M368 974l-11-1 4-7z" fill="#a80000"/>
              <path d="M342 959l-17 9" stroke="#0000a0" stroke-width="4"/><path d="M316 974l11-1-4-7z" fill="#0000a0"/>
              <text x="340" y="923" fill="#2a7a2a">Y</text><text x="371" y="977" fill="#e06060">X</text><text x="308" y="977" fill="#2020d0">Z</text>
            </g>
            <text class="viewname" x="303" y="1022">*Isometric</text>
          </svg>
          <button class="handle" aria-label="Collapse tree"><i class="knob"></i></button>
          <nav class="sidetabs"><button class="on" aria-label="Resources"><svg><use href="#home"/></svg></button><button aria-label="Design library"><svg><use href="#library"/></svg></button><button aria-label="File explorer"><svg><use href="#folder"/></svg></button><button aria-label="View palette"><svg><use href="#palette"/></svg></button><button aria-label="Appearances"><svg><use href="#ball"/></svg></button><button aria-label="Custom properties"><svg><use href="#proptab"/></svg></button></nav>
        </main>
      </div>

      <div class="doctabs">
        <div class="pager"><button aria-label="First"><svg><use href="#first"/></svg></button><button aria-label="Previous"><svg><use href="#back"/></svg></button><button aria-label="Next"><svg><use href="#next"/></svg></button><button aria-label="Last"><svg><use href="#last"/></svg></button></div>
        <button class="on">Model</button><button>3D Views</button><button>Motion Study 1</button><div class="rest"></div>
      </div>
    </div>

    <aside class="resources">
      <header><button aria-label="Collapse pane"><svg><use href="#left2"/></svg></button><h2>SOLIDWORKS Resources</h2><button aria-label="Pane options"><svg class="lg"><use href="#gear"/></svg></button><button aria-label="Pin"><svg class="lg"><use href="#pin"/></svg></button></header>
      <a class="welcome" href="#"><svg><use href="#home"/></svg>Welcome to SOLIDWORKS</a>
      <section class="toolset">
        <h3>SOLIDWORKS Tools<svg><use href="#up"/></svg></h3>
        <a href="#"><svg><use href="#swtab"/></svg>Property Tab Builder</a>
        <a href="#"><svg><use href="#swrx"/></svg>SOLIDWORKS Rx</a>
        <a href="#"><svg><use href="#swrx"/></svg>Performance Benchmark Test</a>
        <a href="#"><svg><use href="#compare"/></svg>Compare My Score</a>
        <a href="#"><svg><use href="#wizard"/></svg>SOLIDWORKS Settings Wizard</a>
        <a href="#"><svg><use href="#products"/></svg>My Products</a>
      </section>
      <section class="online"><h3>Online Resources<svg><use href="#down"/></svg></h3></section>
      <section><h3>Subscription Services<svg><use href="#up"/></svg></h3><a href="#"><svg><use href="#globe"/></svg>Subscription Services</a></section>
    </aside>
  </div>

  <footer class="status"><span>SOLIDWORKS Premium 2023 SP0.1</span><button class="units">MMGS<i class="caret flip"></i></button><svg><use href="#tag"/></svg><i class="sizer"></i></footer>
</div>
<div class="behind"><i></i><i></i></div>
</body>
</html>
```
FILE: styles.css
```css
* { box-sizing: border-box; }
body { margin: 0; min-height: 100vh; display: flex; flex-direction: column; background: #171717; color: #222; font: 13px/20px "Open Sans", "Noto Sans", sans-serif; }
button { margin: 0; padding: 0; border: 0; background: none; color: inherit; font: inherit; display: flex; align-items: center; justify-content: center; white-space: nowrap; }
input { min-width: 0; border: 0; outline: 0; padding: 0; background: none; font: inherit; }
h1, h2, h3, ul { margin: 0; padding: 0; font: inherit; }
a { color: inherit; text-decoration: none; }
svg { width: 20px; height: 20px; flex: none; }
.defs { position: absolute; width: 0; height: 0; }
.caret { width: 0; height: 0; border: 3px solid transparent; border-top: 4px solid #333; border-bottom: 0; }
.flip { transform: rotate(180deg); }

.window { flex: 1; margin: 1px 9px 0; background: #f7f7f7; border-radius: 8px; overflow: hidden; display: flex; flex-direction: column; }
.strip { height: 9px; background: #f2f2f2; border-bottom: 1px solid #c0c0c0; }
.titlebar { height: 39px; border-bottom: 1px solid #c0c0c0; display: flex; align-items: center; }
.logo { width: 146px; height: 38px; padding-left: 5px; border-right: 1px solid #c0c0c0; display: flex; align-items: center; color: #da291c; line-height: 16px; }
.logo .ds { width: 20px; height: 26px; margin-right: 3px; margin-top: -4px; }
.tri { margin-left: auto; margin-right: 6px; border: 5px solid transparent; border-left-color: #777; border-right: 0; }
.quick { flex: none; width: 811px; display: flex; align-items: center; padding-left: 23px; }
.quick button { width: 24px; height: 40px; }
.quick button:first-child { margin-right: 9px; }
.quick .dd { width: 23px; }
.quick .dd::after { content: ""; border: 3px solid transparent; border-top: 4px solid #333; border-bottom: 0; }
.quick .dim::after { border-top-color: #aaa; }
.quick .select { width: 32px; height: 32px; margin-left: -3px; background: #b0b0b0; border: 1px solid #777; }
.quick .seldd { width: 14px; height: 32px; border: 1px solid #888; border-left: 0; background: #fff; }
.quick .wide { width: 33px; }
.quick .last { width: 14px; }
.quick svg { width: 19px; height: 20px; }
h1 { padding-left: 8px; white-space: nowrap; }
.search { margin-left: auto; width: 252px; height: 28px; border: 1px solid #999; background: #fff; display: flex; align-items: center; gap: 7px; padding: 0 5px 0 6px; color: #666; }
.search input { flex: 1; color: #666; }
.search input::placeholder { color: #666; opacity: 1; }
.search .q { color: #2f7da0; }
.search svg { width: 18px; }
.search .caret { border-top-color: #777; }
.sys { display: flex; padding-left: 3px; padding-right: 4px; }
.sys button { width: 41px; height: 36px; color: #333; }
.sys button svg { width: 18px; }

.ribbon { height: 82px; border-bottom: 1px solid #808080; display: flex; position: relative; color: #222; }
.ribbon section { display: grid; margin: 2px 0; border-right: 1px solid #c4c4c4; }
.g1 { width: 312px; padding-left: 5px; grid-template-columns: 72px 72px 1fr; }
.g2 { width: 339px; grid-template-columns: 66px 80px 70px 1fr; }
.g3 { width: 297px; grid-template-columns: 40px 95px 70px 1fr; }
.g4 { width: 126px; padding-left: 4px; grid-template-columns: 66px 1fr; }
.ribbon .g5 { width: 72px; border: 0; grid-template-columns: 1fr; }
.big { height: 76px; flex-direction: column; justify-content: flex-start; padding-top: 4px; line-height: 19px; }
.big svg { margin-bottom: 1px; }
.big .caret { margin-top: 20px; }
.stack { display: grid; grid-template-rows: 26px 26px 26px; }
.stack button { justify-content: flex-start; gap: 6px; height: 24px; }
.collapse { position: absolute; right: 7px; bottom: 7px; color: #222; }
.collapse svg { width: 12px; height: 12px; }

.main { flex: 1; display: flex; min-height: 0; }
.work { flex: 1; min-width: 0; display: flex; flex-direction: column; background: #fff; }
.toprow { height: 28px; display: flex; }
.cmdtabs { display: grid; grid-template-columns: 80px 62px 70px 74px 136px 173px 56px; border-bottom: 1px solid #808080; font-size: 14px; }
.cmdtabs button { background: #d3d3d3; border-right: 1px solid #808080; color: #333; }
.cmdtabs .on { background: #f7f7f7; font-weight: bold; }
.hud { display: flex; align-items: center; padding-left: 110px; padding-top: 2px; opacity: .9; }
.hud button { width: 26px; }
.hud svg { width: 19px; height: 19px; }
.hud .caret { margin: 0 5px 0 3px; border-top-color: #777; }
.docctl { margin-left: auto; padding-right: 6px; display: flex; align-items: center; padding-top: 2px; color: #999; }
.docctl button { width: 26px; }
.docctl svg { width: 16px; height: 16px; }

.bodyrow { flex: 1; min-height: 0; display: flex; }
.tools { width: 52px; background: #f7f7f7; border-right: 1px solid #b8b8b8; }
.grip { height: 13px; margin: 0 2px; background: radial-gradient(circle, #888 1px, transparent 1px) 0 2px / 4px 3px repeat-x; }
.tools button { width: 100%; height: 26px; padding-left: 7px; justify-content: flex-start; }
.tools svg { width: 18px; height: 18px; }
.tools .off { opacity: .3; }
.tools .caret { margin-left: 14px; }
.tools button:last-child { height: 34px; padding-bottom: 8px; border-bottom: 1px solid #808080; }
.tree { width: 229px; display: flex; flex-direction: column; background: #f7f7f7; padding-right: 2px; }
.split { height: 21px; margin-top: 4px; border-top: 1px solid #c0c0c0; border-bottom: 1px solid #c0c0c0; display: flex; justify-content: center; align-items: center; }
.knob { width: 6px; height: 6px; border-radius: 3px; border: 1px solid #999; background: #ddd; }
.mgr { display: grid; grid-template-columns: 41px 40px 40px 40px 40px 1fr; height: 30px; padding-top: 4px; border-bottom: 1px solid #c0c0c0; }
.mgr button { background: #d3d3d3; border: 1px solid #808080; border-left: 0; }
.mgr .on { background: #f7f7f7; border-bottom-color: #f7f7f7; }
.mgr .more { background: none; border: 0; padding-left: 4px; }
.mgr svg { width: 18px; height: 18px; }
.mgr .more svg { width: 13px; height: 13px; }
.filter { height: 32px; margin: 0 3px 0 4px; border: 1px solid #c0c0c0; display: flex; align-items: center; padding-left: 2px; }
.filter svg { width: 18px; height: 18px; }
.filter input { flex: 1; }
.tree ul { list-style: none; font-size: 14px; margin-top: 1px; flex: none; color: #1c1c1c; }
.tree li { height: 24px; padding-left: 26px; display: flex; align-items: center; gap: 5px; white-space: nowrap; }
.tree li svg { width: 18px; height: 18px; }
.tree .root { padding-left: 4px; gap: 4px; }
.tree .ex { padding-left: 9px; }
.tree .ex::before { content: ""; margin-right: 8px; border: 4px solid transparent; border-left-color: #555; border-right: 0; }
.rollback { height: 4px; background: #358ec2; }
.hscroll { margin-top: auto; height: 26px; background: #f0f0f0; border-bottom: 1px solid #c0c0c0; padding: 9px 0 0 21px; }
.hscroll i { display: block; width: 107px; height: 3px; border-radius: 2px; background: #858585; }

.canvas { flex: 1; min-width: 0; position: relative; border-left: 1px solid #808080; border-right: 1px solid #808080; margin-right: -1px; background: #fff; }
.model { position: absolute; inset: 0; width: 100%; height: 100%; }
.metal { stroke: #111; stroke-width: 1; stroke-linejoin: round; filter: drop-shadow(0 0 3px rgba(0, 0, 0, .3)); }
.shadow { fill: #808080; }
.triad { font: 10px "Open Sans", sans-serif; }
.viewname { font: bold 18px Lato, sans-serif; fill: #111; }
.handle { position: absolute; left: -1px; top: 395px; width: 12px; height: 49px; background: #f7f7f7; border: 1px solid #808080; border-left: 0; }
.sidetabs { position: absolute; right: 0; top: 54px; width: 33px; display: grid; grid-auto-rows: 30px; border: 1px solid #808080; border-right: 0; border-bottom: 0; }
.sidetabs button { background: #d3d3d3; border-bottom: 1px solid #808080; }
.sidetabs .on { background: #f7f7f7; }
.sidetabs svg { width: 18px; height: 19px; }

.doctabs { height: 20px; display: flex; background: #f7f7f7; font-size: 14px; padding-left: 78px; }
.pager { display: grid; grid-template-columns: repeat(4, 20px); border-top: 1px solid #222; }
.pager button { background: #a9a9bd; border: 1px solid #8c8ca4; }
.pager svg { width: 14px; height: 14px; }
.doctabs > button { width: 89px; background: #d3d3d3; border: 1px solid #808080; border-left: 0; border-bottom: 0; color: #333; }
.doctabs > .on { width: 77px; padding-left: 4px; background: #f7f7f7; border-top: 0; font-weight: bold; color: #111; }
.doctabs > button:nth-of-type(3) { width: 144px; padding-right: 12px; }
.rest { flex: 1; border-top: 1px solid #808080; }

.resources { width: 300px; border-left: 1px solid #808080; background: #f7f7f7; color: #555; font-size: 12px; display: flex; flex-direction: column; }
.resources header { height: 23px; background: #a9abad; border-bottom: 1px solid #222; display: flex; align-items: center; padding: 0 3px 0 10px; color: #222; }
.resources h2 { flex: 1; text-align: center; font-size: 14px; font-weight: bold; color: #111; }
.resources header svg { width: 12px; height: 12px; }
.resources header .lg { width: 17px; height: 17px; margin-left: 3px; }
.resources a { display: flex; align-items: center; gap: 5px; height: 32px; padding-left: 1px; padding-top: 1px; }
.resources a svg { width: 20px; height: 20px; margin-top: -4px; }
.resources .welcome { margin: 32px 15px 27px; }
.resources section { margin: 0 28px 0 15px; border-top: 1px solid #808080; }
.resources h3 { height: 25px; padding: 0 8px 0 4px; display: flex; align-items: center; justify-content: space-between; font-size: 13px; font-weight: bold; color: #444; }
.resources h3 svg { width: 12px; height: 12px; }
.resources .toolset { height: 246px; }
.resources .online { height: 55px; }

.status { height: 22px; border-top: 1px solid #808080; display: flex; align-items: center; font-size: 14px; padding: 2px 1px 0 0; }
.status span { flex: 1; padding-left: 1px; }
.status svg { width: 17px; height: 16px; margin-right: 12px; }
.units { gap: 27px; margin-right: 26px; }
.sizer { width: 12px; height: 12px; background: radial-gradient(circle, #aaa 1px, transparent 2px) 0 0 / 4px 4px; clip-path: polygon(100% 0, 100% 100%, 0 100%); }
.behind { height: 10px; display: flex; justify-content: flex-end; gap: 10px; padding-right: 10px; }
.behind i { width: 20px; height: 5px; background: #999; border-bottom: 2px solid #bbb; border-radius: 0 0 3px 3px; }
```
